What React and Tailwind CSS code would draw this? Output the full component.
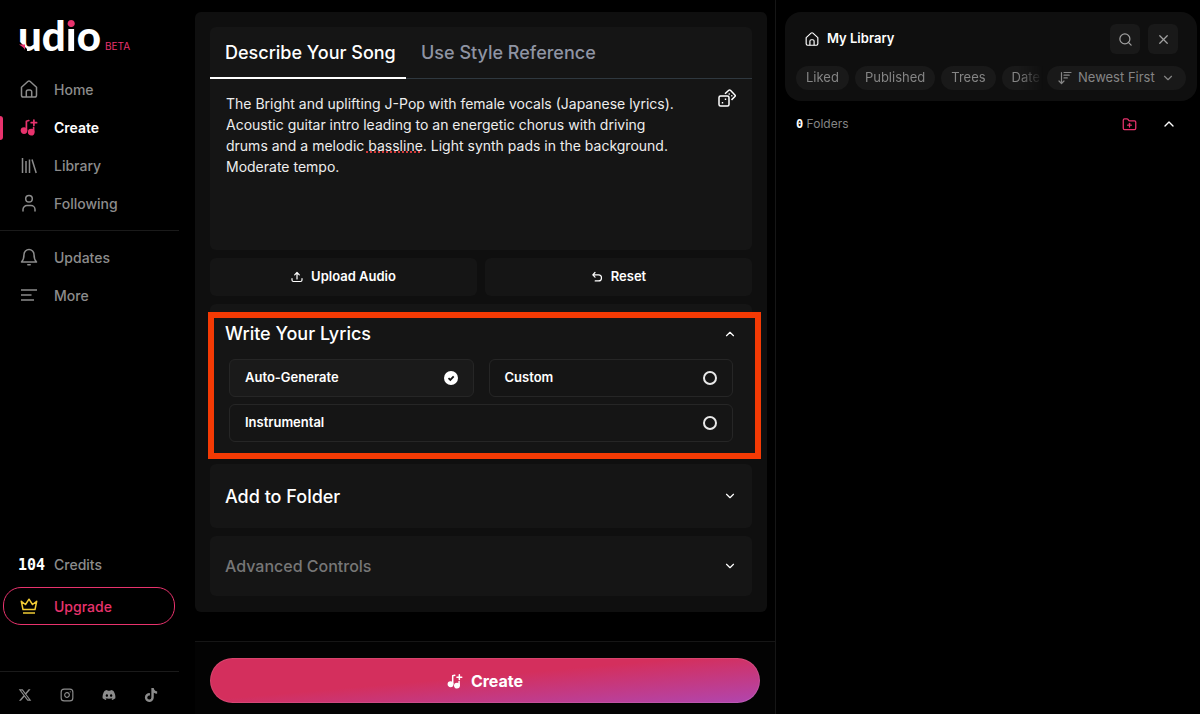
import React, { useState } from 'react'
import { ChevronDown, ChevronUp, FolderPlus, Instagram, Search, X } from 'lucide-react'
import { FaDiscord, FaTiktok, FaXTwitter } from 'react-icons/fa6'

function HomeIcon({ className }) {
    return <svg viewBox="0 0 18 18" fill="none" stroke="currentColor" strokeWidth="1.5" strokeLinejoin="round" className={className}>
        <path d="M1.500 7.200 7.800 1.500a1.800 1.800 0 0 1 2.400 0l6.300 5.700v8a1.800 1.800 0 0 1-1.800 1.800H3.300a1.800 1.800 0 0 1-1.800-1.800z" />
        <path d="M6.300 17v-5.200a1.800 1.800 0 0 1 1.800-1.800h1.800a1.800 1.800 0 0 1 1.800 1.800V17" />
    </svg>
}

function SongIcon({ className }) {
    return <svg viewBox="0 0 18 18" fill="none" stroke="currentColor" strokeWidth="1.7" strokeLinecap="round" strokeLinejoin="round" className={className}>
        <circle cx="4" cy="12.6" r="2.5" fill="currentColor" />
        <circle cx="11.2" cy="14.2" r="2.5" fill="currentColor" />
        <path d="M6.400 12.500V3.200l2.400-.7M13.600 14V9.500M13.900 2v5.400M11.200 4.700h5.400" />
    </svg>
}

function LibraryIcon({ className }) {
    return <svg viewBox="0 0 18 18" fill="none" stroke="currentColor" strokeWidth="1.5" className={className}>
        <path d="M2.500 2v15M6 5v12M9.500 3.500V17M12 3.500 16.200 17" />
    </svg>
}

function UserIcon({ className }) {
    return <svg viewBox="0 0 18 18" fill="none" stroke="currentColor" strokeWidth="1.5" strokeLinecap="round" className={className}>
        <circle cx="9" cy="4.8" r="3.3" />
        <path d="M3 17v-1.500A4 4 0 0 1 7 11.500h4a4 4 0 0 1 4 4V17" />
    </svg>
}

function BellIcon({ className }) {
    return <svg viewBox="0 0 18 18" fill="none" stroke="currentColor" strokeWidth="1.5" strokeLinecap="round" strokeLinejoin="round" className={className}>
        <path d="M9 1.500a5 5 0 0 1 5 5c0 4.500 1 6 2.500 7.500h-15C3 12.500 4 11 4 6.500a5 5 0 0 1 5-5zM7.800 16.800h2.400" />
    </svg>
}

function MoreIcon({ className }) {
    return <svg viewBox="0 0 18 18" fill="none" stroke="currentColor" strokeWidth="1.5" className={className}>
        <path d="M1 4h16M1 9h10.500M1 14h13" />
    </svg>
}

function CrownIcon({ className }) {
    return <svg viewBox="0 0 18 18" fill="none" stroke="currentColor" strokeWidth="1.5" strokeLinejoin="round" className={className}>
        <path d="m3 12.500-1.700-8.200L5.500 7.500 9 2.200l3.500 5.300 4.200-3.200-1.700 8.200zM3 16h12" />
    </svg>
}

function DiceIcon({ className }) {
    return <svg viewBox="0 0 18 18" fill="none" stroke="currentColor" strokeWidth="1.5" strokeLinejoin="round" className={className}>
        <rect x="1" y="7" width="10" height="10" rx="1.5" />
        <path d="M7 4.800 10.800 1.300a1.200 1.200 0 0 1 1.600 0l4.500 4.600a1.200 1.200 0 0 1 0 1.600l-3.400 3.400" />
        <path d="M3.800 13.800h1.400M6.800 10.300h1.400M10.600 5h1.200M13.200 6.700h1.200" />
    </svg>
}

function UploadIcon({ className }) {
    return <svg viewBox="0 0 12 12" fill="none" stroke="currentColor" strokeWidth="1.2" strokeLinecap="round" strokeLinejoin="round" className={className}>
        <path d="M1 7.500V9a1.500 1.500 0 0 0 1.500 1.500h7A1.500 1.500 0 0 0 11 9V7.500M6 8V1.700M3.700 3.800 6 1.500l2.300 2.300" />
    </svg>
}

function ResetIcon({ className }) {
    return <svg viewBox="0 0 12 12" fill="none" stroke="currentColor" strokeWidth="1.2" strokeLinecap="round" strokeLinejoin="round" className={className}>
        <path d="M4 1.500 1.800 3.900 4 6.200M2 3.900h5.500a3 3 0 0 1 0 6H4.200" />
    </svg>
}

function SortIcon({ className }) {
    return <svg viewBox="0 0 14 14" fill="none" stroke="currentColor" strokeWidth="1.2" strokeLinecap="round" strokeLinejoin="round" className={className}>
        <path d="M3.500 1.500v11M1 10l2.500 2.500L6 10M6 1.500h7M6 4.200h5.200M6 6.900h3.300" />
    </svg>
}

const mainLinks = [
    { name: 'Home', icon: HomeIcon },
    { name: 'Create', icon: SongIcon, active: true },
    { name: 'Library', icon: LibraryIcon },
    { name: 'Following', icon: UserIcon },
]

const moreLinks = [
    { name: 'Updates', icon: BellIcon },
    { name: 'More', icon: MoreIcon },
]

const socials = [
    { name: 'X', icon: FaXTwitter },
    { name: 'Instagram', icon: Instagram },
    { name: 'Discord', icon: FaDiscord },
    { name: 'TikTok', icon: FaTiktok },
]

const lyricsModes = ['Auto-Generate', 'Custom', 'Instrumental']

const filters = ['Liked', 'Published', 'Trees', 'Date']

const samplePrompt = 'The Bright and uplifting J-Pop with female vocals (Japanese lyrics). Acoustic guitar intro leading to an energetic chorus with driving drums and a melodic bassline. Light synth pads in the background. Moderate tempo.'

function NavItem({ item }) {
    const Icon = item.icon
    return <li className="relative">
        {item.active && <span className="absolute left-0 top-2 h-6 w-[3px] rounded-r bg-[#e8336d]"></span>}
        <a href="#" className={`flex h-[38px] items-center gap-4 pl-5 ${item.active ? 'font-semibold text-white' : 'font-medium text-[#8c8c8c]'}`}>
            <Icon className={`size-[18px] ${item.active ? 'text-[#e8336d]' : ''}`} />
            {item.name}
        </a>
    </li>
}

function Logo() {
    return <a href="#" className="flex items-end pl-[18px] pt-3">
        <span className="relative font-['Lato',sans-serif] text-[42px] leading-[46px] font-black text-white">
            ud<span className="bg-linear-to-b from-[#e8336d] from-35% to-white to-35% bg-clip-text text-transparent">i</span>o
            <svg viewBox="0 0 9 9" className="absolute left-0 bottom-[7px] size-[9px]">
                <path d="M0 0h2l7 7v2H0z" fill="#000" />
                <path d="M1 2.500h6V8C6 5.500 3.500 4 1 2.500z" fill="#e8336d" />
            </svg>
        </span>
        <span className="mb-1 ml-1 text-[10px] text-[#e8336d]">BETA</span>
    </a>
}

function Sidebar() {
    return <aside className="flex flex-col pr-4 text-[14px]">
        <Logo />
        <nav className="mt-3">
            <ul className="border-b border-[#1a1a1a] pb-2">
                {mainLinks.map((item) => <NavItem key={item.name} item={item} />)}
            </ul>
            <ul className="pt-[7px]">
                {moreLinks.map((item) => <NavItem key={item.name} item={item} />)}
            </ul>
        </nav>

        <div className="mt-auto pb-[46px]">
            <p className="mb-3 flex items-center pl-[18px] font-medium text-[#8c8c8c]">
                <span className="w-9 font-['DejaVu_Sans_Mono',monospace] text-[15px] leading-5 font-bold text-white">104</span>
                Credits
            </p>
            <button className="ml-[3px] mr-1 flex h-[38px] w-[calc(100%-7px)] items-center gap-4 rounded-[18px] border border-[#e8336d] pl-4 font-medium text-[#e8336d]">
                <CrownIcon className="size-[18px] text-[#f0cb35]" />
                Upgrade
            </button>
        </div>

        <div className="flex h-[43px] items-center gap-7 border-t border-[#1a1a1a] pl-[18px] pt-1 text-[#8c8c8c]">
            {socials.map(({ name, icon: Icon }) => <a key={name} href="#" aria-label={name}>
                <Icon className="size-[14px]" />
            </a>)}
        </div>
    </aside>
}

function Prompt() {
    const [text, setText] = useState(samplePrompt)

    return <div className="rounded-md bg-[#151515]">
        <div role="tablist" className="flex h-[52px] border-b border-[#2f383f] text-[18px] font-medium whitespace-nowrap">
            <button role="tab" aria-selected="true" className="-mb-px w-[196px] border-b-2 border-white pl-[15px] text-left text-white">Describe Your Song</button>
            <button role="tab" aria-selected="false" className="px-[15px] text-[#8f94a3]">Use Style Reference</button>
        </div>
        <div className="flex h-[171px] items-start justify-between px-4 pt-[10px]">
            <div className="relative h-full w-[460px]">
                <textarea aria-label="Song description" spellCheck="false" value={text} onChange={(e) => setText(e.target.value)}
                    className="block size-full resize-none overflow-hidden bg-transparent pt-1 text-[14px] leading-[21px] text-[#ededed] outline-none" />
                {/* spelling mark under "bassline" */}
                {text === samplePrompt && <span className="pointer-events-none absolute left-[140px] top-[62px] w-[54px] border-b-2 border-dotted border-[#d33a3a]"></span>}
            </div>
            <button aria-label="Randomize prompt" className="text-white">
                <DiceIcon className="size-[18px]" />
            </button>
        </div>
    </div>
}

function Lyrics() {
    const [mode, setMode] = useState('Auto-Generate')

    return <section className="relative rounded-md bg-[#151515]">
        {/* Highlight frame */}
        <div className="absolute -left-0.5 -right-[9px] top-2 -bottom-[3px] border-6 border-[#f43a04] bg-[#151515]"></div>
        <div className="relative px-[15px] pt-[18px] pb-[14px]">
            <button aria-expanded="true" className="flex w-full items-center justify-between text-[18px] leading-6 font-medium text-white">
                Write Your Lyrics
                <ChevronUp className="size-[14px]" />
            </button>
            <div className="mx-1 mt-[13px] grid grid-cols-2 gap-x-[15px] gap-y-[7px] text-[13px] font-semibold text-white">
                {lyricsModes.map((name) => <label key={name}
                    className={`flex h-[38px] items-center justify-between rounded-md border border-[#262626] px-[15px] ${name === mode ? 'bg-[#1a1a1a]' : ''} ${name === 'Instrumental' ? 'col-span-2' : ''}`}>
                    {name}
                    <span className="grid place-items-center">
                        <input type="radio" name="lyrics" checked={name === mode} onChange={() => setMode(name)}
                            className="col-start-1 row-start-1 size-[14px] appearance-none rounded-full border-2 border-white/90 checked:bg-white" />
                        {name === mode && <svg viewBox="0 0 14 14" className="pointer-events-none col-start-1 row-start-1 size-[14px]">
                            <path d="m4.500 7.200 1.800 1.700 3.400-3.600" fill="none" stroke="#151515" strokeWidth="1.8" />
                        </svg>}
                    </span>
                </label>)}
            </div>
        </div>
    </section>
}

function CreatePanel() {
    return <main className="flex min-w-0 flex-col justify-between border-r border-[#161616]">
        <div className="mr-2 mt-3 flex flex-col gap-2 rounded-md bg-[#0f0f0f] px-[15px] pt-[15px] pb-4">
            <Prompt />
            <div className="grid grid-cols-2 gap-2 text-[13px] font-semibold text-white">
                <button className="flex h-[38px] items-center justify-center gap-2 rounded-md bg-[#151515]">
                    <UploadIcon className="size-3" /> Upload Audio
                </button>
                <button className="flex h-[38px] items-center justify-center gap-2 rounded-md bg-[#151515]">
                    <ResetIcon className="size-3" /> Reset
                </button>
            </div>
            <Lyrics />
            <button className="flex h-16 items-center justify-between rounded-md bg-[#151515] px-[15px] text-[18px] font-medium text-white">
                Add to Folder <ChevronDown className="size-[14px]" />
            </button>
            <button className="flex h-[60px] items-center justify-between rounded-md bg-[#151515] px-[15px] text-[16px] font-medium text-[#777]">
                Advanced Controls <ChevronDown className="size-[14px] text-white" />
            </button>
        </div>

        <div className="mt-4 border-t border-[#161616] bg-[#030303] px-[15px] pt-4 pb-[11px]">
            <button className="flex h-[45px] w-full items-center justify-center gap-2 rounded-full border border-white/10 bg-[linear-gradient(175deg,#d42f5d_45%,#b046b0)] bg-origin-border text-[16px] font-bold text-white">
                <SongIcon className="size-4" /> Create
            </button>
        </div>
    </main>
}

function LibraryPanel() {
    return <aside className="min-w-0 pl-[9px] pr-[3px] pt-3">
        <div className="rounded-2xl bg-[#0f0f0f] px-[11px] pt-3 pb-[11px]">
            <div className="flex items-center gap-2 px-2">
                <HomeIcon className="ml-px size-[14px] text-white" />
                <h2 className="grow text-[13px] font-semibold text-white">My Library</h2>
                <button aria-label="Search" className="grid size-[30px] place-items-center rounded-md bg-[#191919] text-[#a0a0a0]">
                    <Search className="size-[15px]" />
                </button>
                <button aria-label="Close" className="grid size-[30px] place-items-center rounded-md bg-[#191919] text-[#a0a0a0]">
                    <X className="size-[15px]" />
                </button>
            </div>
            <div className="mt-3 flex items-center gap-1 text-[13px] text-[#858585]">
                <div className="flex min-w-0 flex-1 gap-1.5 overflow-hidden mask-r-from-90%">
                    {filters.map((name) => <button key={name} className="h-6 shrink-0 rounded-full bg-[#191919] px-[10px]">{name}</button>)}
                </div>
                <label className="flex h-6 items-center gap-1.5 rounded-full bg-[#191919] px-[11px]">
                    <SortIcon className="size-[14px]" />
                    <select aria-label="Sort by" className="appearance-none bg-transparent outline-none">
                        <option>Newest First</option>
                    </select>
                    <ChevronDown className="size-[14px]" />
                </label>
            </div>
        </div>

        <div className="mt-[14px] flex items-center pl-[11px] pr-5">
            <p className="grow text-[12px] text-[#858585]">
                <span className="font-['DejaVu_Sans_Mono',monospace] font-bold text-white">0</span> Folders
            </p>
            <button aria-label="New folder" className="mr-6 text-[#e8336d]">
                <FolderPlus className="size-[15px]" />
            </button>
            <button aria-label="Collapse folders" className="text-white">
                <ChevronUp className="size-4" />
            </button>
        </div>
    </aside>
}

export default function App() {
    return <div className="grid min-h-screen grid-cols-[195px_581fr_424fr] bg-black font-['Inter',sans-serif]">
        <Sidebar />
        <CreatePanel />
        <LibraryPanel />
    </div>
}
